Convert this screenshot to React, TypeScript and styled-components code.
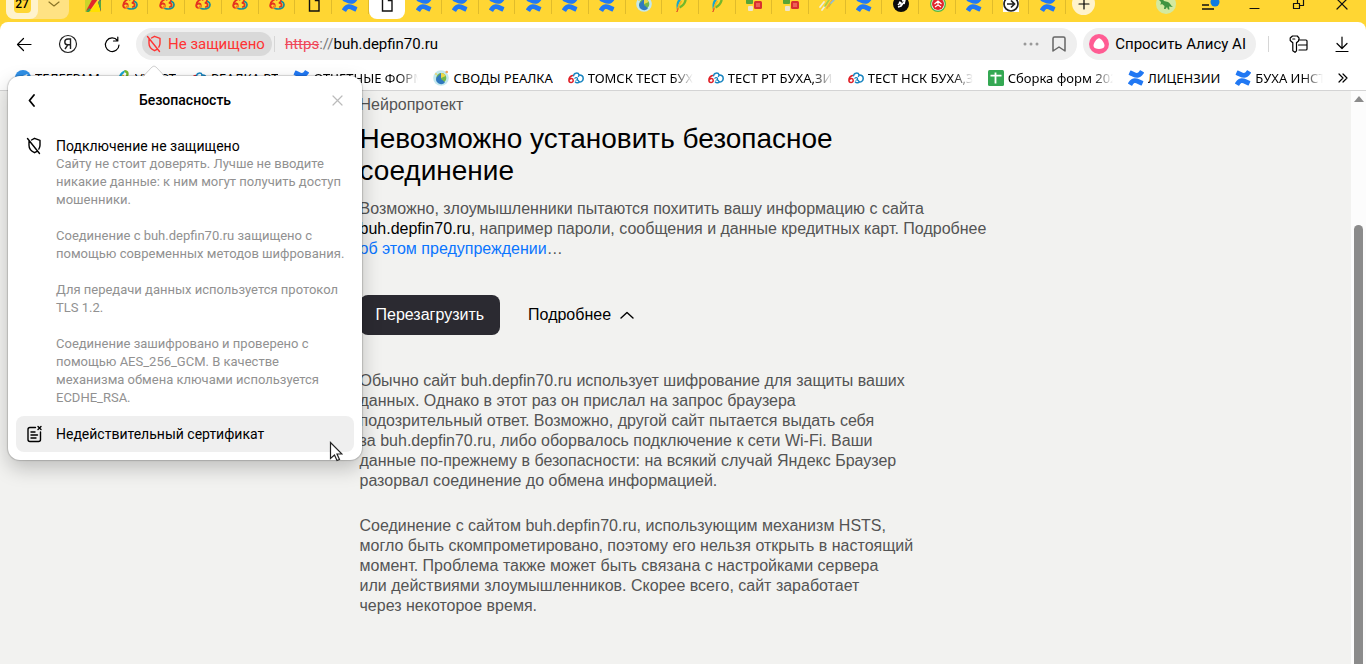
import React from "react";
import styled, { createGlobalStyle, css } from "styled-components";
import { SiConfluence } from "react-icons/si";

const uiFont = `Roboto, "Noto Sans", sans-serif`;
const bookmarkFont = `"Noto Sans", "Open Sans", sans-serif`;
const pageFont = `"Liberation Sans", Arial, sans-serif`;

const GlobalStyle = createGlobalStyle`
  *, *::before, *::after { box-sizing: border-box; }
  body { margin: 0; background: #f2f2f0; font-family: ${uiFont}; color: #000; }
  button, input { font: inherit; color: inherit; }
  button { border: 0; padding: 0; background: none; cursor: pointer; }
  h1, h2, h3, p { margin: 0; font-weight: 400; }
`;

/* ---------- layout ---------- */

const Window = styled.div`
  position: relative;
  display: flex;
  flex-direction: column;
  height: 100vh;
  overflow: hidden;
`;

const Chrome = styled.header`
  background: #ffd633;
`;

/* ---------- tab strip ---------- */

const TabStrip = styled.div`
  display: flex;
  height: 30px;
  margin-top: -8px;
  padding: 0 2px 0 6px;
`;

const TabGroup = styled.div`
  display: flex;
  width: 63px;
  height: 27px;
  margin-right: 6px;
  border-radius: 0 0 8px 8px;
  background: #ffe283;
`;

const GroupCount = styled.button`
  display: flex;
  justify-content: center;
  width: 32px;
  height: 27px;
  border-radius: 0 0 8px 8px;
  background: #fff3cc;

  span {
    width: 17px;
    height: 21px;
    border-radius: 4px;
    background: #ffd633;
    font-size: 12px;
    font-weight: 500;
    line-height: 24px;
    text-align: center;
  }
`;

const GroupToggle = styled.button`
  flex: 1;
  height: 24px;
  display: flex;
  align-items: center;
  justify-content: center;
  color: #8a7426;
`;

const Tabs = styled.nav`
  flex: 1;
  display: flex;
  min-width: 0;
`;

const Tab = styled.button<{ $active?: boolean }>`
  flex: 1 1 0;
  min-width: 0;
  display: flex;
  align-items: center;
  justify-content: center;
  height: 27px;
  padding-bottom: 3px;
  ${(p) =>
    p.$active
      ? css`
          border-radius: 0 0 8px 8px;
          background: #fff;
        `
      : css`
          background: linear-gradient(#e0bb2b, #e0bb2b) right 0 top 0 / 1px 22px no-repeat;
        `}
`;

const NewTab = styled.button`
  display: flex;
  align-items: center;
  justify-content: center;
  width: 23px;
  height: 23px;
  margin: 0 49px 0 6px;
  border-radius: 50%;
  background: #fff3cc;
`;

const WindowButton = styled.button`
  width: 44px;
  height: 24px;
  display: flex;
  align-items: center;
  justify-content: center;
`;

/* ---------- toolbar ---------- */

const Toolbar = styled.div`
  display: flex;
  align-items: center;
  height: 46px;
  padding: 0 2px 2px;
  border-radius: 8px 8px 0 0;
  background: #fff;
`;

const ToolButton = styled.button`
  display: flex;
  align-items: center;
  justify-content: center;
  width: 44px;
  height: 32px;
`;

const AddressBar = styled.form`
  flex: 1;
  display: flex;
  align-items: center;
  height: 32px;
  margin: 0 6px 0 2px;
  padding: 0 4px 0 6px;
  border-radius: 16px;
  background: #efefef;
`;

const SecurityButton = styled.button`
  display: flex;
  align-items: center;
  gap: 6px;
  height: 24px;
  padding: 0 7px 0 4px;
  border-radius: 12px;
  background: #d9d9d9;
  color: #ff3333;
  font-size: 15px;
  line-height: 20px;
  white-space: nowrap;
`;

const Divider = styled.span<{ $space?: number }>`
  width: 1px;
  height: 16px;
  margin: 0 ${(p) => p.$space ?? 0}px;
  background: #d6d6d6;
`;

const Url = styled.div`
  flex: 1;
  margin-left: 8px;
  font-size: 15px;
  line-height: 20px;

  s {
    color: #f0475a;
  }
  span {
    color: #777;
  }
`;

const BarButton = styled.button`
  display: flex;
  align-items: center;
  justify-content: center;
  width: 28px;
  height: 28px;
`;

const AliceButton = styled.button`
  display: flex;
  align-items: center;
  gap: 6px;
  height: 32px;
  margin-right: 12px;
  padding: 0 10px 0 6px;
  border-radius: 16px;
  background: #efefef;
  font-size: 15px;
  line-height: 20px;
  white-space: nowrap;
`;

const Tools = styled.div`
  display: flex;
  align-items: center;
  margin-left: 7px;
`;

/* ---------- bookmarks ---------- */

const Bookmarks = styled.nav`
  display: flex;
  align-items: center;
  gap: 15px;
  height: 23px;
  padding: 0 18px 2px 15px;
  border-bottom: 1px solid #d4d4d4;
  background: #fff;
  font-family: ${bookmarkFont};
`;

const Bookmark = styled.a`
  display: flex;
  flex: none;
  align-items: center;
  gap: 4px;
  min-width: 0;
  max-width: 125px;
  color: #000;
  font-size: 13px;
  line-height: 20px;
  text-decoration: none;

  &:last-of-type {
    flex: 0 1 auto;
  }
`;

const BookmarkText = styled.span<{ $faded?: boolean }>`
  flex: 1;
  overflow: hidden;
  white-space: nowrap;
  ${(p) =>
    p.$faded &&
    css`
      mask-image: linear-gradient(to left, transparent, #000 20px);
    `}
`;

const MoreBookmarks = styled.button`
  display: flex;
  flex: none;
  margin-left: auto;
`;

/* ---------- page ---------- */

const Viewport = styled.div`
  flex: 1;
  display: flex;
  min-height: 0;
`;

const Page = styled.main`
  flex: 1;
  padding-top: 4px;
  overflow: hidden;
  background: #f2f2f0;
  color: #545454;
  font: 16px/20px ${pageFont};
`;

const Article = styled.article`
  max-width: 632px;
  margin: 0 auto;
`;

const Title = styled.h1`
  max-width: 560px;
  margin: 8px 0 12px;
  color: #000;
  font-size: 28px;
  line-height: 32px;
`;

const Lead = styled.p`
  strong {
    color: #000;
    font-weight: 400;
  }
  a {
    color: #0a75ff;
    text-decoration: none;
  }
`;

const Actions = styled.div`
  display: flex;
  gap: 28px;
  margin: 36px 0;
`;

const ReloadButton = styled.button`
  height: 40px;
  padding: 0 16px;
  border-radius: 8px;
  background: #2b2a31;
  color: #fff;
`;

const DetailsButton = styled.button`
  display: flex;
  align-items: center;
  gap: 9px;
  color: #000;
`;

const Details = styled.p`
  margin-bottom: 25px;
`;

const Scrollbar = styled.div`
  display: flex;
  flex-direction: column;
  align-items: center;
  justify-content: space-between;
  width: 15px;
  padding-top: 5px;
  background: #fcfcfc;
`;

const Thumb = styled.div`
  width: 9px;
  height: calc(100% - 129px);
  border-radius: 5px 5px 0 0;
  background: #8b8b8b;
`;

/* ---------- security popup ---------- */

const Popup = styled.section`
  position: absolute;
  top: 76px;
  left: 8px;
  width: 354px;
  padding: 8px;
  border-radius: 12px;
  background: #fff;
  box-shadow: 0 0 1px 1px rgba(0, 0, 0, 0.16), 0 8px 20px rgba(0, 0, 0, 0.22);
`;

const PopupArrow = styled.svg`
  position: absolute;
  top: -11px;
  left: 134px;
`;

const PopupHeader = styled.div`
  display: flex;
  align-items: center;
  justify-content: space-between;
  height: 32px;
  padding: 0 8px;

  h2 {
    font-size: 14px;
    line-height: 20px;
    font-weight: 500;
  }
`;

const IconButton = styled.button`
  display: flex;
  align-items: center;
  justify-content: center;
  width: 16px;
  height: 16px;
`;

const Status = styled.div`
  display: flex;
  gap: 12px;
  padding: 21px 0 9px 8px;

  h3 {
    font-size: 14px;
    line-height: 18px;
  }
`;

const StatusText = styled.p`
  margin-bottom: 18px;
  color: #919191;
  font-size: 13px;
  line-height: 18px;
  white-space: nowrap;

  &:last-child {
    margin-bottom: 0;
  }
`;

const CertificateButton = styled.button`
  display: flex;
  align-items: center;
  gap: 12px;
  width: 100%;
  height: 36px;
  padding: 0 8px;
  border-radius: 8px;
  background: #efefef;
  font-size: 14px;
  line-height: 18px;
`;

const Cursor = styled.svg`
  position: absolute;
  top: 365px;
  left: 321px;
`;

/* ---------- icons ---------- */

type IconName =
  | "square" | "cloud" | "sixThree" | "doc" | "confluence" | "globe" | "feather" | "cubes"
  | "stripes" | "black" | "badge" | "arrow" | "telegram" | "sheet";

const glyphs: Record<IconName, React.ReactNode> = {
  square: (
    <>
      <path d="M0 0h16L1 16H0z" fill="#c9d42a" />
      <path d="M1 15L9 0h6L6 13z" fill="#e3262b" />
      <path d="M16 2v14l-6-5z" fill="#5e2a8c" />
      <path d="M1 16l3-4 4 4z" fill="#3fa34d" />
      <path d="M4 16l9-10 3 10z" fill="#ffe100" />
      <path d="M13 6l3-2v11z" fill="#57a843" />
    </>
  ),
  cloud: (
    <g fill="none" strokeWidth="1.500" strokeLinecap="round">
      <path d="M4.500 5.500C2.200 6.300.9 8.300.9 10.200c0 3 4.300 3 4.300.2 0-2.200-2.800-2.400-3.900-.5" stroke="#e01f26" />
      <path d="M5.600 5.700c.3-3.200 4.700-3.400 5.500-.7 2.600-.3 4.200 1.500 4.100 3.600-.1 2.400-2 3.600-4 3.300-.8 1.200-3 1.300-3.700.2" stroke="#1684c0" />
      <path d="M6.900 8.300c.6-1 2.600-.9 2.700.4 0 .8-.5 1-.8 1.200 1.200 0 2 .6 2.400 2M11.100 5c0 .8-.3 1.200-.8 1.500" stroke="#1684c0" strokeWidth="1.200" />
    </g>
  ),
  sixThree: (
    <g fill="none" strokeLinecap="round">
      <path d="M5.500 3.500C2.800 4.800 1.200 6.900 1.200 9.300c0 3.400 4.600 3.400 4.600.2 0-2.300-2.800-2.600-4.200-.8" stroke="#e5321f" strokeWidth="1.900" />
      <path d="M5.800 9.500c0 1.400-.8 2.500-2.200 2.500" stroke="#f4901c" strokeWidth="1.500" />
      <path d="M7.800 3.800C9 2.300 12 2.600 12 4.800c0 1.500-1.300 2-2.300 2 3.600 0 3.800 3.700 1 4.200" stroke="#e5321f" strokeWidth="1.700" />
      <path d="M12.800 5.500c2.800 1.300 2.800 4.600.7 6.200-1.800 1.300-5 1.500-7.500.8" stroke="#1b8c9c" strokeWidth="1.700" />
    </g>
  ),
  doc: <path d="M3.500 1h6L13 4.500V15H3.500zM9.500 1v3.500H13" fill="none" stroke="#111" strokeWidth="1.400" />,
  confluence: <SiConfluence size={16} color="#2178f3" />,
  globe: (
    <>
      <circle cx="8" cy="8" r="7.800" fill="#c3e8ee" />
      <circle cx="8.300" cy="8" r="5" fill="#72b84c" />
      <path d="M8 3v6l4 3.300A5 5 0 0 1 3.400 7.500z" fill="#2f79bf" />
      <path d="M8 3v5l4.700-2A5 5 0 0 0 8 3z" fill="#ead84a" />
      <circle cx="13.700" cy="2" r="1.300" fill="#f0a15d" />
      <circle cx="3" cy="4" r="1" fill="#e9d56b" />
    </>
  ),
  feather: (
    <>
      <path d="M4 14C2.500 8 4 2 10.500.200L9 3C6 5.500 5 9 5 14z" fill="#18a6cf" />
      <path d="M9.500 1.200C14.500 1 13 8 6.500 11.500" fill="none" stroke="#74b72b" strokeWidth="2.400" />
      <path d="M4 14c1.500-2 2-6 4.500-9" fill="none" stroke="#f5b31b" strokeWidth="1.600" />
      <path d="M3 16c1-1 1.500-3 1.500-4l1.200.500L4.500 16z" fill="#e34b2b" />
    </>
  ),
  cubes: (
    <>
      <rect x="0" y="1" width="7" height="7" rx="1" fill="#58a436" />
      <rect x="8" y="5" width="8" height="8" rx="1.500" fill="#d8302f" />
      <rect x="10" y="7" width="4" height="4" fill="#ed6057" />
      <rect x="2" y="10" width="5" height="5" rx="1" fill="#eee5ce" />
    </>
  ),
  stripes: (
    <g fill="none" strokeLinecap="round" strokeWidth="1.700">
      <path d="M1 11l4-5M3 14l3-4" stroke="#efefdf" />
      <path d="M6 10l4-6M10 10l2-3" stroke="#a4cd4a" />
      <path d="M8 12l6-9" stroke="#f3ab34" />
      <path d="M12 7l3-3" stroke="#8dbdd5" />
    </g>
  ),
  black: (
    <>
      <circle cx="8" cy="8" r="8" fill="#0b0b0b" />
      <path d="M5 11l3-1 3-4M6 6l2 1v3M9 5l3-1-1 4M5 9l3-3" fill="none" stroke="#fff" strokeWidth="1.500" />
    </>
  ),
  badge: (
    <>
      <circle cx="8" cy="8" r="8" fill="#51b848" />
      <circle cx="8" cy="8" r="6.600" fill="#fff" />
      <circle cx="8" cy="8" r="6" fill="#e0262d" />
      <path d="M4.500 8l3.500-3 3.500 3M5 11l3-2 3 2M8 5v4" fill="none" stroke="#fff" strokeWidth="1.100" />
    </>
  ),
  arrow: (
    <>
      <path d="M0 0h16v16H0z" fill="#fff" />
      <circle cx="8" cy="8" r="7" fill="none" stroke="#222" strokeWidth="1.700" />
      <path d="M4 8h7M8 4.500L11.500 8 8 11.500" fill="none" stroke="#222" strokeWidth="1.700" />
    </>
  ),
  telegram: (
    <>
      <circle cx="8" cy="8" r="8" fill="#2f8fe6" />
      <path d="M3 8l9.500-4-1.700 8.500L8 10.300l-1.600 1.500-.4-2.600z" fill="#fff" />
    </>
  ),
  sheet: (
    <>
      <rect width="16" height="16" rx="1.500" fill="#34a853" />
      <path d="M2.500 5.700h11M7.500 2.500v11" stroke="#fff" strokeWidth="1.800" />
    </>
  ),
};

const IconSvg = styled.svg`
  flex: none;
`;

const Favicon = ({ name }: { name: IconName }) => (
  <IconSvg width="16" height="16" viewBox="0 0 16 16" aria-hidden="true">
    {glyphs[name]}
  </IconSvg>
);

const Line = ({
  d, w = 16, h = 16, stroke = 1.2, color = "currentColor",
}: { d: string; w?: number; h?: number; stroke?: number; color?: string }) => (
  <IconSvg width={w} height={h} viewBox={`0 0 ${w} ${h}`} fill="none" stroke={color} strokeWidth={stroke} strokeLinecap="round" strokeLinejoin="round" aria-hidden="true">
    <path d={d} />
  </IconSvg>
);

const Shield = ({ w }: { w: number }) => (
  <IconSvg width={w} height={18} viewBox={`${(16 - w) / 2} 0 ${w} 18`} fill="none" stroke="currentColor" strokeWidth="1.400" strokeLinecap="round" strokeLinejoin="round" aria-hidden="true">
    <path d="M5.500 3l3-1.700 5.500 2v5c0 1.600-.5 2.800-1.200 3.800M11 14.300l-2.500 1.400c-3.500-1.500-5.500-4-5.500-7.400V4.500M1.500 1.500l12 15" />
  </IconSvg>
);

/* ---------- data ---------- */

const tabs: IconName[] = [
  "square", "sixThree", "sixThree", "sixThree", "sixThree", "sixThree", "doc", "confluence", "doc",
  "confluence", "confluence", "confluence", "confluence", "confluence", "confluence",
  "globe", "feather", "feather", "cubes", "cubes", "stripes", "confluence", "black",
  "badge", "confluence", "arrow", "confluence",
];
const activeTab = 8;

const bookmarks: { icon: IconName; text: string; faded?: boolean }[] = [
  { icon: "telegram", text: "ТЕЛЕГРАМ" },
  { icon: "feather", text: "УХТ РТ" },
  { icon: "cloud", text: "РЕАЛКА РТ" },
  { icon: "confluence", text: "ОТЧЕТНЫЕ ФОРМЫ", faded: true },
  { icon: "globe", text: "СВОДЫ РЕАЛКА" },
  { icon: "cloud", text: "ТОМСК ТЕСТ БУХА", faded: true },
  { icon: "cloud", text: "ТЕСТ РТ БУХА,ЗИК", faded: true },
  { icon: "cloud", text: "ТЕСТ НСК БУХА,ЗИК", faded: true },
  { icon: "sheet", text: "Сборка форм 2024", faded: true },
  { icon: "confluence", text: "ЛИЦЕНЗИИ" },
  { icon: "confluence", text: "БУХА ИНСТРУКЦИИ", faded: true },
];

export default function App() {
  return (
    <Window>
      <GlobalStyle />
      <Chrome>
        <TabStrip>
          <TabGroup>
            <GroupCount><span>27</span></GroupCount>
            <GroupToggle aria-label="Список вкладок"><Line d="M1 1l5 4 5-4" w={12} h={6} /></GroupToggle>
          </TabGroup>
          <Tabs>
            {tabs.map((name, i) => (
              <Tab key={i} $active={i === activeTab} aria-label={`Вкладка ${i + 1}`}>
                <Favicon name={name} />
              </Tab>
            ))}
          </Tabs>
          <NewTab aria-label="Новая вкладка"><Line d="M6 1v10M1 6h10" w={12} h={12} /></NewTab>
          <WindowButton aria-label="Профиль">
            <svg width="20" height="20" viewBox="0 0 20 20">
              <circle cx="10" cy="10" r="10" fill="#d3e9a0" />
              <path d="M3 6l3-2 2 3 4 1c2 1 3 4 5 5l-4-.5.5 3H12l-1-2.500-1.500 2H8l.5-3L6 10l-1.500 1L5 8z" fill="#3f9440" />
            </svg>
          </WindowButton>
          <WindowButton aria-label="Меню">
            <svg width="20" height="20" viewBox="0 0 20 20">
              <path d="M2 11h7M2 15h12" stroke="#111" strokeWidth="1.300" />
              <circle cx="15" cy="8" r="4.500" fill="#0f7be0" />
            </svg>
          </WindowButton>
          <WindowButton aria-label="Свернуть"><Line d="M2 12.500h9" w={13} h={16} color="#111" /></WindowButton>
          <WindowButton aria-label="Восстановить"><Line d="M1.500 7.500h6v5h-6zM5.500 7V3.500h6v6H8" w={13} h={16} color="#111" /></WindowButton>
          <WindowButton aria-label="Закрыть"><Line d="M1 3l10 10M11 3L1 13" w={12} h={16} color="#111" /></WindowButton>
        </TabStrip>

        <Toolbar>
          <ToolButton aria-label="Назад"><Line d="M15 8.500H1.500M7.500 2.500l-6 6 6 6" /></ToolButton>
          <ToolButton aria-label="Яндекс">
            <svg width="20" height="20" viewBox="0 0 20 20" fill="none" stroke="#222" strokeWidth="1.200">
              <circle cx="10" cy="10" r="8.500" />
              <path d="M12.500 15V5H10C7.500 5 6.800 6.700 6.800 8c0 1.600 1 2.800 2.800 2.800h2.900M9.800 10.800L7 15" strokeWidth="1.400" />
            </svg>
          </ToolButton>
          <ToolButton aria-label="Обновить"><Line d="M13.500 4.500A6.800 6.800 0 1 0 15 9M13.800 1v4H9.500" w={17} h={17} /></ToolButton>
          <AddressBar>
            <SecurityButton type="button">
              <Shield w={16} />
              Не защищено
            </SecurityButton>
            <Divider $space={2} />
            <Url><s>https</s><span>://</span>buh.depfin70.ru</Url>
            <BarButton type="button" aria-label="Ещё">
              <svg width="16" height="4" viewBox="0 0 16 4" fill="#999">
                <circle cx="2" cy="2" r="1.500" /><circle cx="8" cy="2" r="1.500" /><circle cx="14" cy="2" r="1.500" />
              </svg>
            </BarButton>
            <BarButton type="button" aria-label="В закладки"><Line d="M1 2.500C1 1.500 1.500 1 2.500 1h9c1 0 1.500.5 1.500 1.500V15l-6-4-6 4z" w={14} h={16} stroke={1.500} color="#666" /></BarButton>
          </AddressBar>
          <AliceButton>
            <svg width="20" height="20" viewBox="0 0 20 20">
              <circle cx="10" cy="10" r="10" fill="#ff5c93" />
              <path d="M10 4.300c2.400 0 5.800 5.500 5.500 7.800-.3 2.200-2.900 3-5.500 3s-5.200-.8-5.500-3C4.200 9.800 7.600 4.300 10 4.300z" fill="#fff" />
            </svg>
            Спросить Алису AI
          </AliceButton>
          <Divider />
          <Tools>
            <ToolButton aria-label="Пароли">
              <Line d="M3.500 1h4.800l1.800 2.200L9.500 6 7.500 7.800v8L6 17.300l-2.200-1.500v-8L1.200 5.500V3zM10.500 5H17c.7 0 1 .3 1 1v8c0 .7-.3 1-1 1h-7M9.500 10H18M3.800 4h2" w={19} h={18} />
            </ToolButton>
            <ToolButton aria-label="Загрузки"><Line d="M7 1v11M2 7.500L7 12.500l5-5M1 15.500h12" w={14} h={17} /></ToolButton>
          </Tools>
        </Toolbar>

        <Bookmarks>
          {bookmarks.map((b) => (
            <Bookmark key={b.text} href="#">
              <Favicon name={b.icon} />
              <BookmarkText $faded={b.faded}>{b.text}</BookmarkText>
            </Bookmark>
          ))}
          <MoreBookmarks aria-label="Другие закладки"><Line d="M1 1l4 4-4 4M5 1l4 4-4 4" w={10} h={10} /></MoreBookmarks>
        </Bookmarks>
      </Chrome>

      <Viewport>
        <Page>
          <Article>
            <p>Нейропротект</p>
            <Title>Невозможно установить безопасное соединение</Title>
            <Lead>
              Возможно, злоумышленники пытаются похитить вашу информацию с сайта<br />
              <strong>buh.depfin70.ru</strong>, например пароли, сообщения и данные кредитных карт. Подробнее<br />
              <a href="#">об этом предупреждении</a>…
            </Lead>
            <Actions>
              <ReloadButton>Перезагрузить</ReloadButton>
              <DetailsButton>
                Подробнее
                <Line d="M1 7l6-5.500L13 7" w={14} h={9} stroke={1.4} />
              </DetailsButton>
            </Actions>
            <Details>
              Обычно сайт buh.depfin70.ru использует шифрование для защиты ваших<br />
              данных. Однако в этот раз он прислал на запрос браузера<br />
              подозрительный ответ. Возможно, другой сайт пытается выдать себя<br />
              за buh.depfin70.ru, либо оборвалось подключение к сети Wi-Fi. Ваши<br />
              данные по-прежнему в безопасности: на всякий случай Яндекс Браузер<br />
              разорвал соединение до обмена информацией.
            </Details>
            <Details>
              Соединение с сайтом buh.depfin70.ru, использующим механизм HSTS,<br />
              могло быть скомпрометировано, поэтому его нельзя открыть в настоящий<br />
              момент. Проблема также может быть связана с настройками сервера<br />
              или действиями злоумышленников. Скорее всего, сайт заработает<br />
              через некоторое время.
            </Details>
          </Article>
        </Page>
        <Scrollbar>
          <svg width="10" height="6" viewBox="0 0 10 6"><path d="M5 0l5 6H0z" fill="#8b8b8b" /></svg>
          <Thumb />
        </Scrollbar>
      </Viewport>

      <Popup>
        <PopupArrow width="24" height="13" viewBox="0 0 24 13">
          <path d="M1 12L10 2.500q2-2 4 0L23 12v1H1z" fill="#fff" />
          <path d="M1 11.500L10 2q2-2 4 0l9 9.500" fill="none" stroke="#d0d0d0" />
        </PopupArrow>
        <PopupHeader>
          <IconButton aria-label="Назад"><Line d="M6 1L1.500 6.500 6 12" w={8} h={13} stroke={1.8} /></IconButton>
          <h2>Безопасность</h2>
          <IconButton aria-label="Закрыть"><Line d="M1 1l9 9M10 1l-9 9" w={11} h={11} color="#bbb" /></IconButton>
        </PopupHeader>
        <Status>
          <Shield w={20} />
          <div>
            <h3>Подключение не защищено</h3>
            <StatusText>
              Сайту не стоит доверять. Лучше не вводите<br />
              никакие данные: к ним могут получить доступ<br />
              мошенники.
            </StatusText>
            <StatusText>
              Соединение с buh.depfin70.ru защищено с<br />
              помощью современных методов шифрования.
            </StatusText>
            <StatusText>
              Для передачи данных используется протокол<br />
              TLS 1.2.
            </StatusText>
            <StatusText>
              Соединение зашифровано и проверено с<br />
              помощью AES_256_GCM. В качестве<br />
              механизма обмена ключами используется<br />
              ECDHE_RSA.
            </StatusText>
          </div>
        </Status>
        <CertificateButton>
          <Line d="M11.500 2.500H6c-1.500 0-2 .5-2 2v10c0 1.500.5 2 2 2h8.500c1.500 0 2-.5 2-2V7M7 7h4M7 10h6.500M7 13h5M14 1.500l3 3M17 1.500l-3 3" w={20} h={19} stroke={1.4} />
          Недействительный сертификат
        </CertificateButton>
        <Cursor width="14" height="21" viewBox="0 0 14 21">
          <path d="M1.500 1.500v16l4-3.500 2.500 5.500 2.500-1L8 13h5z" fill="#fff" stroke="#222" strokeWidth="1.200" />
        </Cursor>
      </Popup>
    </Window>
  );
}
